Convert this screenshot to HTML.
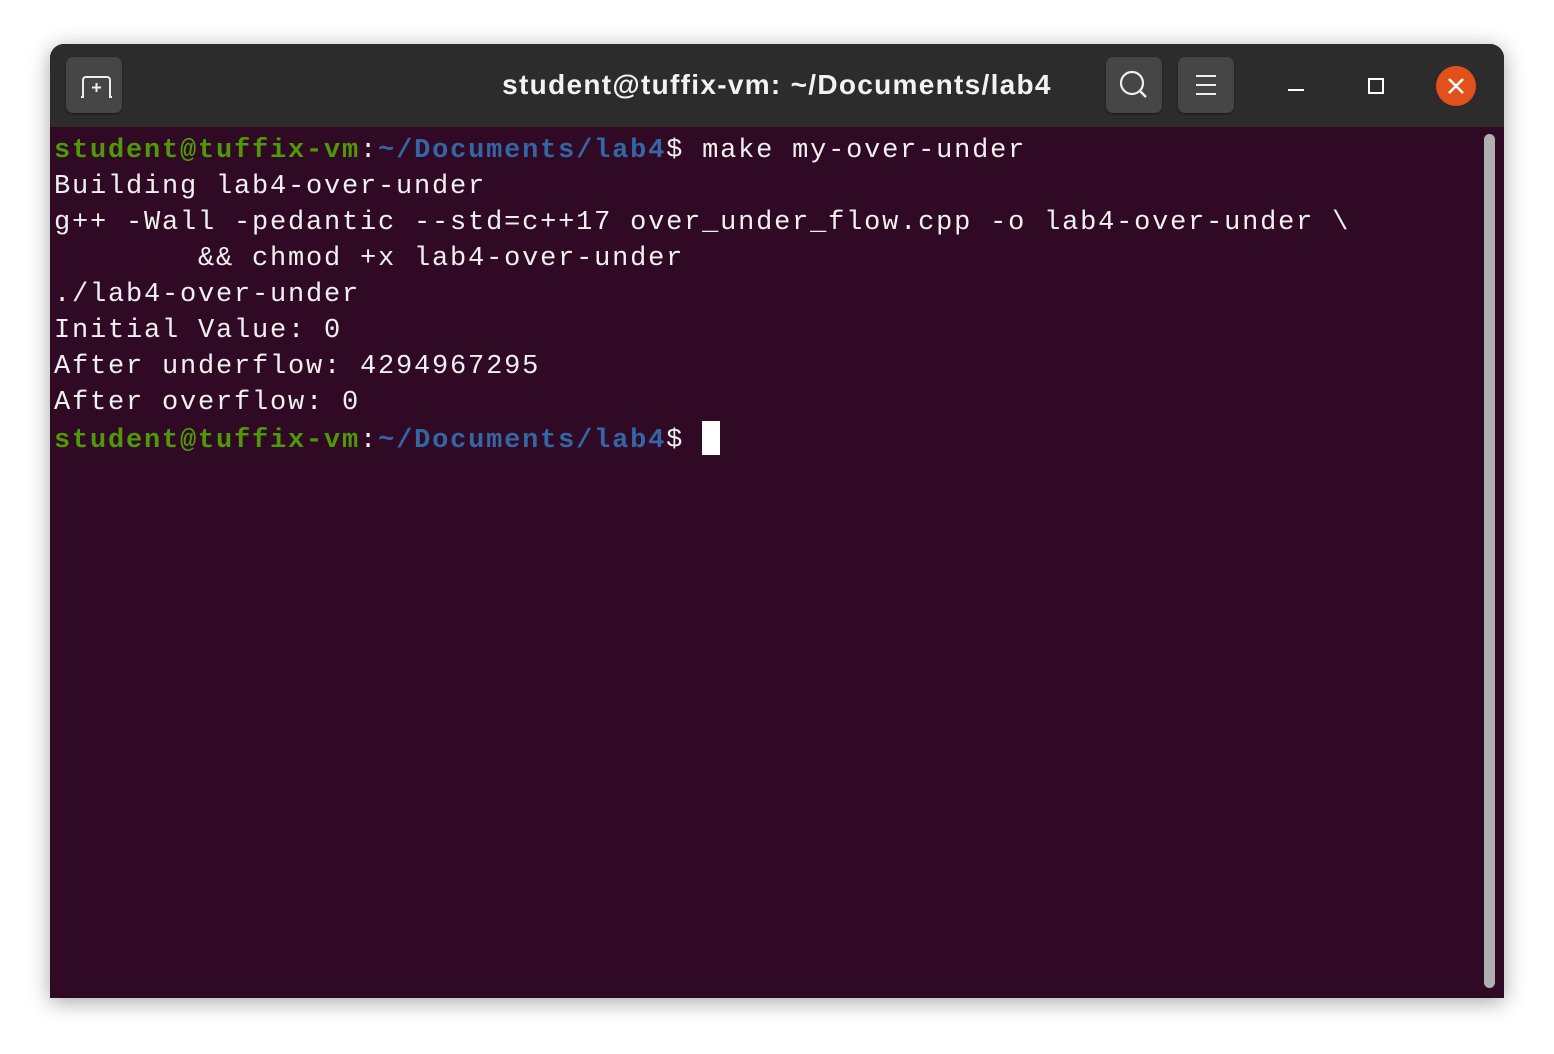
<!DOCTYPE html>
<html><head><style>
html,body{margin:0;padding:0;background:#fff;width:1554px;height:1054px;overflow:hidden}
.win{position:absolute;left:50px;top:44px;width:1454px;height:954px;border-radius:14px 14px 0 0;background:#2c2c2c;box-shadow:0 4px 22px rgba(0,0,0,.35);overflow:hidden}
.hdr{position:absolute;left:0;top:0;width:1454px;height:83px;background:#2c2c2c}
.btn{position:absolute;top:13px;width:56px;height:56px;border-radius:7px;background:#464646;box-shadow:0 1px 2px rgba(0,0,0,.5)}
.title{position:absolute;left:0;width:1454px;top:25px;text-align:center;color:#f2f2f2;font:bold 28px "Liberation Sans",sans-serif;letter-spacing:1.3px}
.term{position:absolute;left:0;top:83px;width:1454px;height:871px;background:#300a24}
pre{margin:0;position:absolute;left:4px;top:6px;font:27px/36px "Liberation Mono",monospace;letter-spacing:1.8px;color:#f0f0f0}
.g{color:#4e9a06;font-weight:bold}.b{color:#3465a4;font-weight:bold}
.cur{display:inline-block;width:18px;height:34px;background:#fff;vertical-align:-8px}
.sb{position:absolute;left:1434px;top:7px;width:11px;height:854px;border-radius:6px;background:#b0b0b0}
</style></head><body>
<div class="win">
<div class="hdr">
<div class="btn" style="left:16px"><svg width="56" height="56" viewBox="0 0 56 56"><path d="M15 40h2V23a3 3 0 0 1 3-3h21a3 3 0 0 1 3 3v17h2" fill="none" stroke="#eee" stroke-width="2"/><path d="M30.5 26v9M26 30.5h9" stroke="#eee" stroke-width="2"/></svg></div>
<div class="title">student@tuffix-vm: ~/Documents/lab4</div>
<div class="btn" style="left:1056px"><svg width="56" height="56" viewBox="0 0 56 56"><circle cx="26" cy="26" r="11" fill="none" stroke="#eee" stroke-width="2.2"/><path d="M34 34l6 6" stroke="#eee" stroke-width="2.5"/></svg></div>
<div class="btn" style="left:1128px"><svg width="56" height="56" viewBox="0 0 56 56"><path d="M18 19h20M18 28h20M18 37h20" stroke="#eee" stroke-width="2"/></svg></div>
<div style="position:absolute;left:1238px;top:45px;width:16px;height:2px;background:#fff"></div>
<div style="position:absolute;left:1318px;top:34px;width:12px;height:12px;border:2px solid #fff"></div>
<div style="position:absolute;left:1386px;top:22px;width:40px;height:40px;border-radius:50%;background:#e2501b"><svg width="40" height="40" viewBox="0 0 40 40"><path d="M13 13l14 14M27 13L13 27" stroke="#fff" stroke-width="2.5"/></svg></div>
</div>
<div class="term">
<pre><span class="g">student@tuffix-vm</span>:<span class="b">~/Documents/lab4</span>$ make my-over-under
Building lab4-over-under
g++ -Wall -pedantic --std=c++17 over_under_flow.cpp -o lab4-over-under \
        &amp;&amp; chmod +x lab4-over-under
./lab4-over-under
Initial Value: 0
After underflow: 4294967295
After overflow: 0
<span class="g">student@tuffix-vm</span>:<span class="b">~/Documents/lab4</span>$ <span class="cur"></span></pre>
<div class="sb"></div>
</div>
</div>
</body></html>
